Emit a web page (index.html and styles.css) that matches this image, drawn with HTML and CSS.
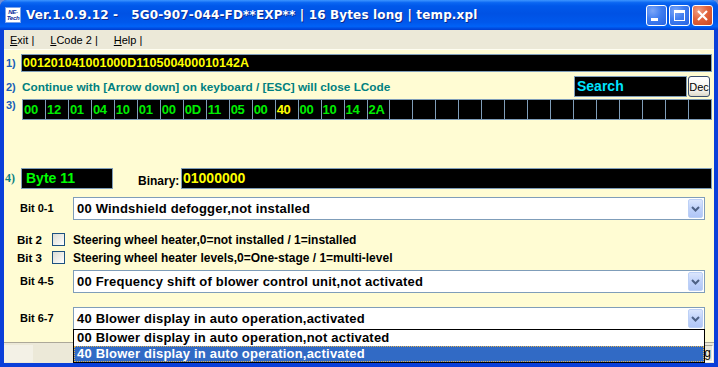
FILE: index.html
```html
<!DOCTYPE html>
<html lang="en">
<head>
  <meta charset="UTF-8" />
  <meta name="viewport" content="width=device-width, initial-scale=1.0"/>
  <title>LCode</title>
  <link rel="stylesheet" href="styles.css">
</head>
<body>

  <div class="window">
    <div class="titlebar">
      <div class="app-icon"><span>NE-</span><span>Tech</span></div>
      <div class="title">Ver.1.0.9.12 -   5G0-907-044-FD**EXP** | 16 Bytes long | temp.xpl</div>
      <div class="title-btns">
        <div class="tbtn">
          <svg width="19" height="19" viewBox="0 0 19 19"><rect x="4" y="12" width="7" height="3" fill="#fff"/></svg>
        </div>
        <div class="tbtn">
          <svg width="19" height="19" viewBox="0 0 19 19"><rect x="4.5" y="4.5" width="10" height="10" fill="none" stroke="#fff"/><rect x="4" y="4" width="11" height="3" fill="#fff"/></svg>
        </div>
        <div class="tbtn close">
          <svg width="19" height="19" viewBox="0 0 19 19"><path d="M5 5 L14 14 M14 5 L5 14" stroke="#fff" stroke-width="2.2"/></svg>
        </div>
      </div>
    </div>

    <div class="frame">
      <div class="menubar">
        <span class="menu-item"><u>E</u>xit |</span>
        <span class="menu-item"><u>L</u>Code 2 |</span>
        <span class="menu-item"><u>H</u>elp |</span>
      </div>

      <div class="client">
        <div class="row row-code">
          <span class="num">1)</span>
          <div class="lcd code-string">001201041001000D110500400010142A</div>
        </div>

        <div class="row row-hint">
          <span class="num">2)</span>
          <span class="hint">Continue with [Arrow down] on keyboard / [ESC] will close LCode</span>
          <div class="lcd search">Search</div>
          <button class="dec-btn">Dec</button>
        </div>

        <div class="row row-bytes">
          <span class="num">3)</span>
          <div class="byte-grid">
            <div class="cell">00</div>
            <div class="cell">12</div>
            <div class="cell">01</div>
            <div class="cell">04</div>
            <div class="cell">10</div>
            <div class="cell">01</div>
            <div class="cell">00</div>
            <div class="cell">0D</div>
            <div class="cell">11</div>
            <div class="cell">05</div>
            <div class="cell">00</div>
            <div class="cell active">40</div>
            <div class="cell">00</div>
            <div class="cell">10</div>
            <div class="cell">14</div>
            <div class="cell">2A</div>
            <div class="cell"></div>
            <div class="cell"></div>
            <div class="cell"></div>
            <div class="cell"></div>
            <div class="cell"></div>
            <div class="cell"></div>
            <div class="cell"></div>
            <div class="cell"></div>
            <div class="cell"></div>
            <div class="cell"></div>
            <div class="cell"></div>
            <div class="cell"></div>
            <div class="cell"></div>
            <div class="cell"></div>
          </div>
        </div>

        <div class="row row-byte">
          <span class="num num-serif">4)</span>
          <div class="lcd byte-name">Byte 11</div>
          <span class="bin-label">Binary:</span>
          <div class="lcd binary">01000000</div>
        </div>

        <div class="row bit-row bit-01">
          <span class="bit-label">Bit 0-1</span>
          <div class="combo">
            <span class="combo-text">00 Windshield defogger,not installed</span>
            <div class="combo-arrow"><svg width="9" height="6" viewBox="0 0 9 6"><path d="M1 1 L4.5 4.5 L8 1" fill="none" stroke="#4d6185" stroke-width="2"/></svg></div>
          </div>
        </div>

        <div class="row check-row bit-2">
          <span class="check-label">Bit 2</span>
          <span class="checkbox"></span>
          <span class="check-text">Steering wheel heater,0=not installed / 1=installed</span>
        </div>

        <div class="row check-row bit-3">
          <span class="check-label">Bit 3</span>
          <span class="checkbox"></span>
          <span class="check-text">Steering wheel heater levels,0=One-stage / 1=multi-level</span>
        </div>

        <div class="row bit-row bit-45">
          <span class="bit-label">Bit 4-5</span>
          <div class="combo">
            <span class="combo-text">00 Frequency shift of blower control unit,not activated</span>
            <div class="combo-arrow"><svg width="9" height="6" viewBox="0 0 9 6"><path d="M1 1 L4.5 4.5 L8 1" fill="none" stroke="#4d6185" stroke-width="2"/></svg></div>
          </div>
        </div>

        <div class="row bit-row bit-67">
          <span class="bit-label">Bit 6-7</span>
          <div class="combo open">
            <span class="combo-text">40 Blower display in auto operation,activated</span>
            <div class="combo-arrow"><svg width="9" height="6" viewBox="0 0 9 6"><path d="M1 1 L4.5 4.5 L8 1" fill="none" stroke="#4d6185" stroke-width="2"/></svg></div>
            <div class="combo-list">
              <div class="option">00 Blower display in auto operation,not activated</div>
              <div class="option selected">40 Blower display in auto operation,activated</div>
            </div>
          </div>
        </div>
      </div>

      <div class="statusbar">
        <div class="status-grip"></div>
        <div class="status-panel">Coding</div>
      </div>
    </div>
  </div>

</body>
</html>
```

FILE: styles.css
```css
* {
  margin: 0;
  padding: 0;
  box-sizing: border-box;
}

body {
  width: 718px;
  height: 367px;
  overflow: hidden;
  background: #6d8fd8;
  font-family: 'Liberation Sans', Arial, sans-serif;
}

.window {
  width: 718px;
  height: 367px;
  display: flex;
  flex-direction: column;
  background: #0a3fd9;
  border-radius: 7px 7px 0 0;
}

/* title bar */

.titlebar {
  height: 30px;
  display: flex;
  align-items: center;
  padding: 0 5px;
  border-radius: 7px 7px 0 0;
  background: linear-gradient(to bottom, #3d95ff 0%, #0a66f2 9%, #0058ea 20%, #0052e4 45%, #0058ec 75%, #0062f7 88%, #0048dc 96%, #003dd0 100%);
}

.app-icon {
  width: 16px;
  height: 16px;
  display: flex;
  flex-direction: column;
  align-items: center;
  justify-content: center;
  background: #fff;
  border: 1px solid #7aa2e8;
  color: #0a2a9a;
  font-size: 6px;
  font-weight: bold;
  font-style: italic;
  line-height: 6px;
  letter-spacing: -0.3px;
}

.title {
  flex: 1;
  margin-left: 5px;
  color: #fff;
  font-family: 'DejaVu Sans', sans-serif;
  font-size: 12px;
  font-weight: bold;
  letter-spacing: 0.15px;
  white-space: pre;
  text-shadow: 1px 1px 0 #0b2a8c;
}

.title-btns {
  display: flex;
  gap: 2px;
}

.tbtn {
  width: 21px;
  height: 21px;
  border: 1px solid #fff;
  border-radius: 3px;
  background: radial-gradient(circle at 30% 25%, #7ba6f8 0%, #3f7df0 45%, #2662e2 100%);
}

.tbtn.close {
  background: radial-gradient(circle at 30% 25%, #f0a086 0%, #e2643c 45%, #c94621 100%);
}

.tbtn svg {
  display: block;
}

/* frame */

.frame {
  flex: 1;
  display: flex;
  flex-direction: column;
  margin: 0 4px 4px;
}

.menubar {
  height: 19px;
  display: flex;
  gap: 16px;
  padding-left: 6px;
  background: #ece9d8;
  font-size: 11px;
  line-height: 20px;
  color: #000;
}

.client {
  flex: 1;
  padding: 4px 2px 0 2px;
  background: #fffcd3;
  border-top: 1px solid #fffef2;
  font-weight: bold;
}

.row {
  display: flex;
  align-items: center;
}

.num {
  width: 15px;
  font-size: 11px;
  color: #1a5fb8;
}

.lcd {
  background: #000;
  border: 1px solid #7f9db9;
  font-weight: bold;
}

.row-code {
  height: 18px;
}

.code-string {
  flex: 1;
  height: 18px;
  padding-left: 1px;
  color: #ffff00;
  font-size: 12.5px;
  line-height: 16px;
}

.row-hint {
  height: 21px;
  margin-top: 4px;
}

.row-hint .num {
  width: 16px;
}

.hint {
  color: #008080;
  font-size: 11.8px;
}

.search {
  width: 113px;
  height: 21px;
  margin-left: auto;
  padding-left: 2px;
  color: #00e4ff;
  font-size: 14px;
  line-height: 19px;
}

.dec-btn {
  width: 22px;
  height: 21px;
  margin: 0 2px 0 1px;
  border: 1px solid #3a4f6e;
  border-radius: 3px;
  background: linear-gradient(to bottom, #fff 0%, #f4f3ee 70%, #dcd8c8 100%);
  font-family: 'Liberation Sans', Arial, sans-serif;
  font-size: 11px;
  color: #000;
}

.row-bytes {
  margin-top: 2px;
  align-items: flex-start;
}

.row-bytes .num {
  width: 16px;
  line-height: 11px;
  padding-top: 1px;
}

.byte-grid {
  width: 690px;
  height: 21px;
  display: grid;
  grid-template-columns: repeat(30, 1fr);
  gap: 1px;
  padding: 1px;
  background: #7f9db9;
}

.cell {
  background: #000;
  color: #00ee00;
  font-size: 13px;
  line-height: 19px;
  padding-left: 1px;
  letter-spacing: -0.3px;
}

.cell.active {
  color: #ffff00;
}

.row-byte {
  height: 21px;
  margin-top: 48px;
}

.num-serif {
  margin-left: -1px;
  width: 16px;
  font-family: 'Liberation Serif', serif;
  font-size: 12px;
  color: #0a8080;
}

.byte-name {
  width: 92px;
  height: 21px;
  padding-left: 4px;
  color: #00ff00;
  font-size: 14px;
  line-height: 19px;
}

.bin-label {
  width: 68px;
  padding: 4px 0 0 25px;
  font-size: 12px;
  color: #000;
}

.binary {
  flex: 1;
  height: 21px;
  padding-left: 1px;
  color: #ffff00;
  font-size: 14px;
  line-height: 19px;
}

/* bit rows */

.bit-row {
  height: 23px;
}

.bit-01 {
  margin-top: 8px;
}

.bit-45 {
  margin-top: 4px;
}

.bit-67 {
  margin-top: 14px;
}

.bit-label {
  width: 67px;
  padding: 0 0 2px 14px;
  font-size: 11px;
  color: #000;
}

.combo {
  position: relative;
  width: 632px;
  height: 23px;
  display: flex;
  align-items: center;
  padding-left: 3px;
  background: #fff;
  border: 1px solid #7f9db9;
}

.combo-text,
.option {
  font-size: 13px;
  letter-spacing: 0.2px;
  color: #000;
  white-space: nowrap;
}

.combo-arrow {
  width: 15px;
  height: 19px;
  margin-left: auto;
  margin-right: 1px;
  display: flex;
  align-items: center;
  justify-content: center;
  border: 1px solid #bcd0f6;
  border-radius: 2px;
  background: linear-gradient(to bottom, #dbe6fd 0%, #c0d2fa 50%, #b0c6f6 100%);
}

.combo-list {
  position: absolute;
  top: 100%;
  left: -1px;
  width: 632px;
  z-index: 10;
  background: #fff;
  border: 1px solid #000;
}

.option {
  height: 16px;
  line-height: 16px;
  padding-left: 3px;
}

.option.selected {
  background: #316ac5;
  color: #fff;
  outline: 1px dotted #e0b050;
  outline-offset: -1px;
}

.check-row {
  height: 17px;
}

.bit-2 {
  margin-top: 11px;
}

.bit-3 {
  margin-top: 1px;
}

.check-label {
  width: 46px;
  padding-left: 11px;
  font-size: 11.5px;
  color: #000;
}

.checkbox {
  width: 13px;
  height: 13px;
  margin-right: 8px;
  border: 1px solid #1c5180;
  background: linear-gradient(135deg, #dcdcd5 0%, #efeeea 55%, #fff 100%);
}

.check-text {
  font-size: 12px;
  color: #000;
}

/* status bar */

.statusbar {
  height: 21px;
  display: flex;
  align-items: stretch;
  padding: 2px 1px 1px 0;
  background: #ece9d8;
  border-top: 1px solid #aca899;
}

.status-grip {
  width: 29px;
  background: #f3f1e6;
}

.status-panel {
  width: 200px;
  margin-left: auto;
  padding-right: 1px;
  text-align: right;
  border: 1px solid #aca899;
  border-right-color: #fff;
  border-bottom-color: #fff;
  font-size: 12px;
  line-height: 15px;
  color: #000;
}
```
